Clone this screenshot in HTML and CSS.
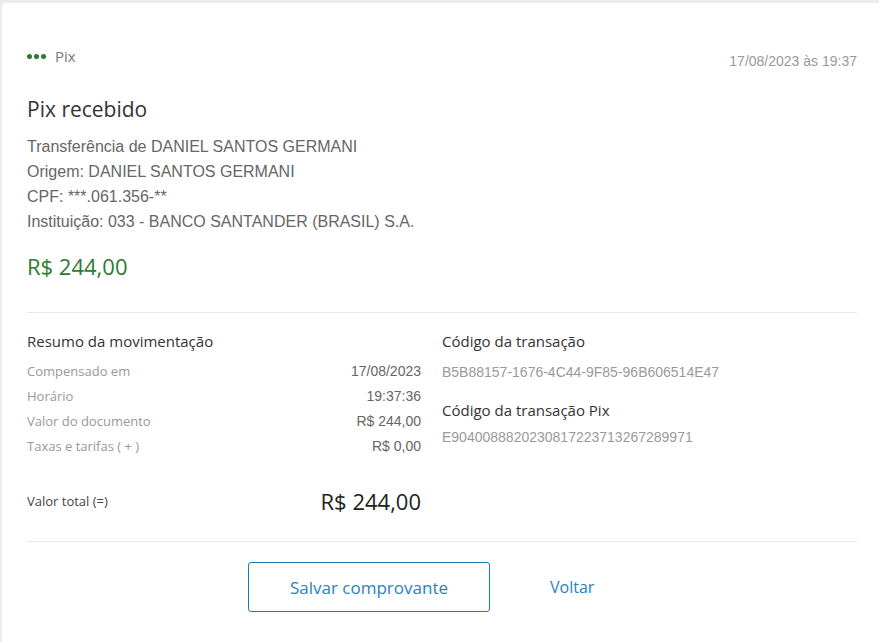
FILE: index.html
```html
<!DOCTYPE html>
<html lang="pt-BR">
<head>
<meta charset="utf-8">
<link rel="stylesheet" href="styles.css">
</head>
<body>
<div class="card">
  <div class="top">
    <div class="brand"><span class="dots"><i></i><i></i><i></i></span><span>Pix</span></div>
    <div class="stamp">17/08/2023 às 19:37</div>
  </div>
  <h1 class="title">Pix recebido</h1>
  <div class="info">
    <p>Transferência de DANIEL SANTOS GERMANI</p>
    <p>Origem: DANIEL SANTOS GERMANI</p>
    <p>CPF: ***.061.356-**</p>
    <p>Instituição: 033 - BANCO SANTANDER (BRASIL) S.A.</p>
  </div>
  <div class="amount">R$ 244,00</div>
  <hr class="divider">
  <div class="cols">
    <div class="summary">
      <h2 class="sub">Resumo da movimentação</h2>
      <div class="row"><span class="lbl">Compensado em</span><span class="val">17/08/2023</span></div>
      <div class="row"><span class="lbl">Horário</span><span class="val">19:37:36</span></div>
      <div class="row"><span class="lbl">Valor do documento</span><span class="val">R$ 244,00</span></div>
      <div class="row"><span class="lbl">Taxas e tarifas ( + )</span><span class="val">R$ 0,00</span></div>
      <div class="total"><span class="tlbl">Valor total (=)</span><span class="tval">R$ 244,00</span></div>
    </div>
    <div class="codes">
      <h2 class="sub">Código da transação</h2>
      <div class="code">B5B88157-1676-4C44-9F85-96B606514E47</div>
      <h2 class="sub sub2">Código da transação Pix</h2>
      <div class="code code2">E9040088820230817223713267289971</div>
    </div>
  </div>
  <hr class="divider divider2">
  <div class="actions">
    <button class="btn">Salvar comprovante</button>
    <a class="link">Voltar</a>
  </div>
</div>
</body>
</html>
```
FILE: styles.css
```css
* { box-sizing: border-box; }
html, body { margin: 0; padding: 0; }
body {
  background: #ececec;
  font-family: "Open Sans", "Liberation Sans", sans-serif;
  width: 879px;
  height: 642px;
  overflow: hidden;
}
.card {
  background: #fff;
  margin: 3px 0 0 2px;
  border-top-left-radius: 4px;
  padding: 0 22px 0 25px;
  height: 639px;
}
.top {
  display: flex;
  justify-content: space-between;
  align-items: flex-start;
  padding-top: 43px;
}
.brand {
  display: flex;
  align-items: center;
  gap: 9px;
  font-size: 15px;
  color: #777;
  height: 20px;
}
.dots { display: flex; gap: 2px; }
.dots i { display: block; width: 5px; height: 5px; border-radius: 50%; background: #2b7a33; }
.stamp {
  font-family: "Liberation Sans", sans-serif;
  font-size: 14px;
  color: #999;
  margin-top: 7px;
}
.title {
  font-size: 21px;
  font-weight: 400;
  color: #333;
  margin: 26px 0 0;
  line-height: 28px;
}
.info {
  margin-top: 11px;
  font-family: "Liberation Sans", sans-serif;
  font-size: 16px;
  color: #666;
}
.info p { margin: 0; line-height: 25px; }
.amount {
  color: #2e7a33;
  font-size: 22px;
  margin-top: 20px;
  line-height: 24px;
}
.divider {
  border: 0;
  border-top: 1px solid #e8e8e8;
  margin: 34px 0 0;
}
.cols {
  display: grid;
  grid-template-columns: 394px 1fr;
  gap: 21px;
  padding-top: 17px;
}
.sub {
  font-size: 15px;
  font-weight: 400;
  color: #333;
  margin: 0;
  line-height: 22px;
}
.row {
  display: flex;
  justify-content: space-between;
  font-size: 13px;
  line-height: 25px;
}
.summary .sub { margin-bottom: 7px; }
.lbl { color: #999; }
.val { color: #666; font-family: "Liberation Sans", sans-serif; font-size: 14px; }
.total {
  display: flex;
  justify-content: space-between;
  align-items: center;
  margin-top: 27px;
}
.tlbl { font-size: 13px; color: #444; }
.tval { font-size: 22px; color: #222; }
.code {
  font-family: "Liberation Sans", sans-serif;
  font-size: 14px;
  color: #9a9a9a;
  line-height: 20px;
  margin-top: 10px;
}
.code2 { margin-top: 6px; }
.sub2 { margin-top: 17px; }
.divider2 { margin-top: 25px; }
.actions {
  display: flex;
  align-items: center;
  padding-top: 20px;
  padding-left: 221px;
}
.btn {
  width: 242px;
  height: 50px;
  background: #fff;
  border: 1px solid #1b7bb9;
  border-radius: 3px;
  color: #2a82c0;
  font-family: "Open Sans", "Liberation Sans", sans-serif;
  font-size: 17px;
}
.link {
  margin-left: 60px;
  color: #2a82c0;
  font-size: 16px;
}
```
